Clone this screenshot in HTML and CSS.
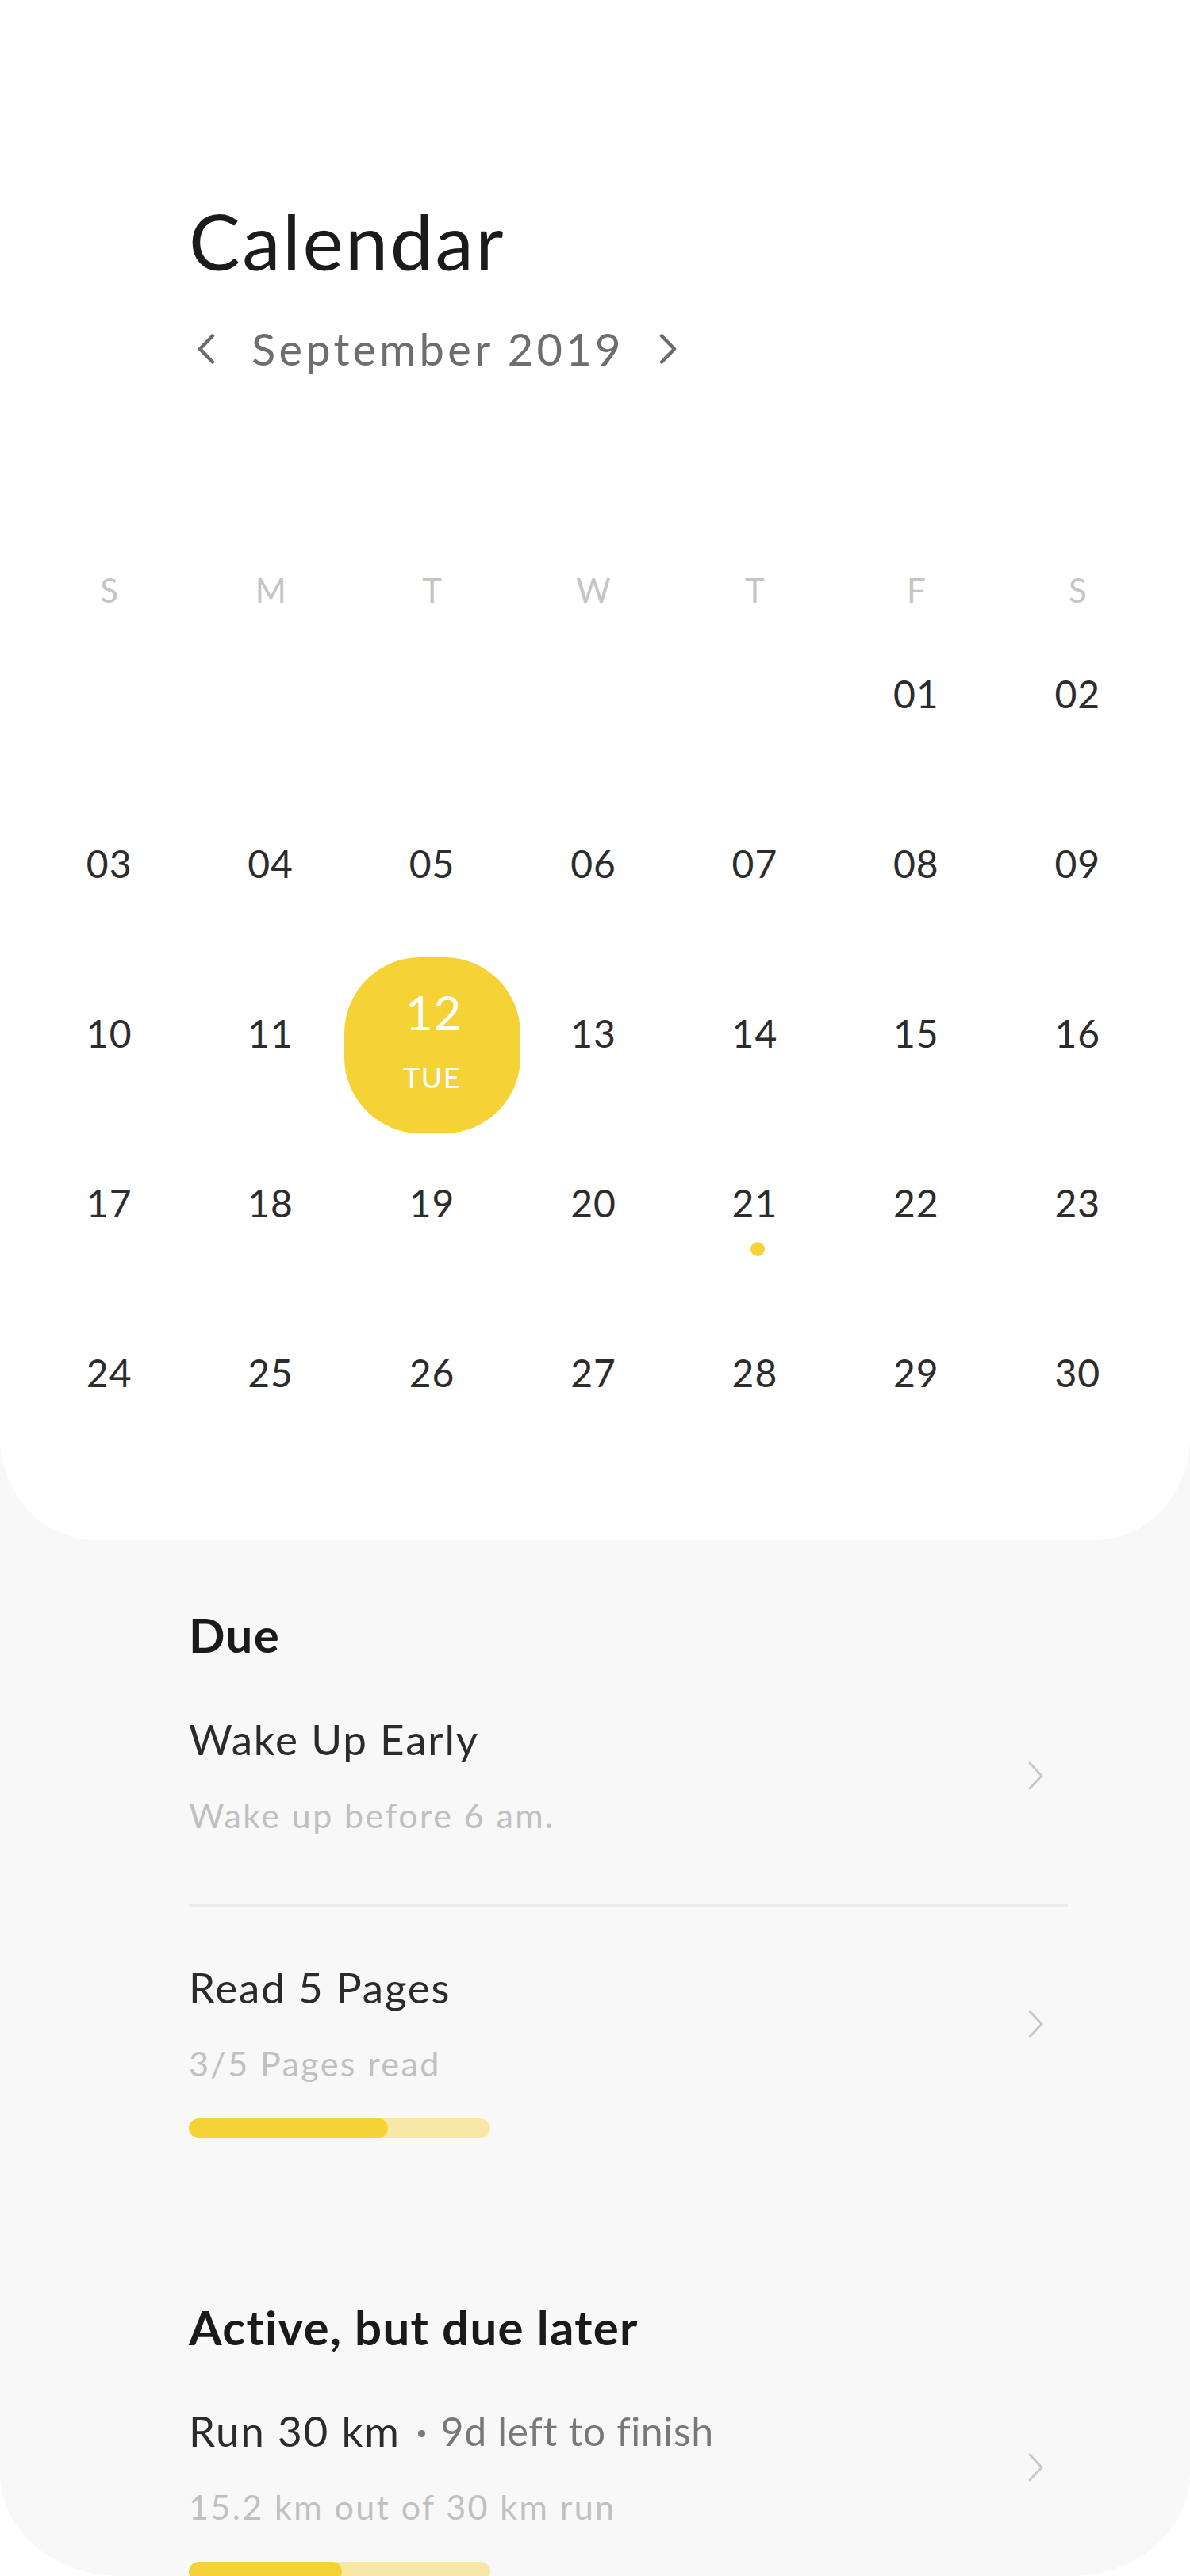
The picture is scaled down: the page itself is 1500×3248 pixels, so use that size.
FILE: index.html
```html
<!DOCTYPE html>
<html lang="en">
<head>
<meta charset="utf-8">
<title>Calendar</title>
<link rel="stylesheet" href="styles.css">
</head>
<body>
<div class="screen">
  <section class="cal-card">
    <div class="header">
      <h1 class="title">Calendar</h1>
      <div class="month-nav">
        <svg class="nav-chev" viewBox="0 0 22 38" aria-hidden="true"><path d="M19 2.5 L3 19 L19 35.5"/></svg>
        <span class="month">September 2019</span>
        <svg class="nav-chev nav-chev-r" viewBox="0 0 22 38" aria-hidden="true"><path d="M3 2.5 L19 19 L3 35.5"/></svg>
      </div>
    </div>
    <div class="weekdays">
      <span>S</span><span>M</span><span>T</span><span>W</span><span>T</span><span>F</span><span>S</span>
    </div>
    <div class="days">
      <div class="day"></div><div class="day"></div><div class="day"></div><div class="day"></div><div class="day"></div>
      <div class="day"><span>01</span></div><div class="day"><span>02</span></div>
      <div class="day"><span>03</span></div><div class="day"><span>04</span></div><div class="day"><span>05</span></div><div class="day"><span>06</span></div><div class="day"><span>07</span></div><div class="day"><span>08</span></div><div class="day"><span>09</span></div>
      <div class="day"><span>10</span></div><div class="day"><span>11</span></div>
      <div class="day"><div class="sel"><span class="sel-num">12</span><span class="sel-dow">TUE</span></div></div>
      <div class="day"><span>13</span></div><div class="day"><span>14</span></div><div class="day"><span>15</span></div><div class="day"><span>16</span></div>
      <div class="day"><span>17</span></div><div class="day"><span>18</span></div><div class="day"><span>19</span></div><div class="day"><span>20</span></div>
      <div class="day"><span>21</span><i class="event-dot"></i></div>
      <div class="day"><span>22</span></div><div class="day"><span>23</span></div>
      <div class="day"><span>24</span></div><div class="day"><span>25</span></div><div class="day"><span>26</span></div><div class="day"><span>27</span></div><div class="day"><span>28</span></div><div class="day"><span>29</span></div><div class="day"><span>30</span></div>
    </div>
  </section>

  <section class="tasks">
    <h2 class="section-title">Due</h2>
    <div class="item">
      <div class="item-row">
        <div class="item-text">
          <div class="item-title">Wake Up Early</div>
          <div class="item-sub">Wake up before 6 am.</div>
        </div>
        <svg class="chev" viewBox="0 0 21 36" aria-hidden="true"><path d="M3 2 L18 18 L3 34"/></svg>
      </div>
    </div>
    <div class="divider"></div>
    <div class="item">
      <div class="item-row">
        <div class="item-text">
          <div class="item-title">Read 5 Pages</div>
          <div class="item-sub">3/5 Pages read</div>
        </div>
        <svg class="chev" viewBox="0 0 21 36" aria-hidden="true"><path d="M3 2 L18 18 L3 34"/></svg>
      </div>
      <div class="bar"><div class="bar-fill" style="width:66%"></div></div>
    </div>

    <h2 class="section-title section-later">Active, but due later</h2>
    <div class="item">
      <div class="item-row">
        <div class="item-text">
          <div class="item-title">Run 30 km<i class="meta-dot"></i><span class="meta">9d left to finish</span></div>
          <div class="item-sub">15.2 km out of 30 km run</div>
        </div>
        <svg class="chev" viewBox="0 0 21 36" aria-hidden="true"><path d="M3 2 L18 18 L3 34"/></svg>
      </div>
      <div class="bar"><div class="bar-fill" style="width:50.7%"></div></div>
    </div>
  </section>
</div>
</body>
</html>
```

FILE: styles.css
```css
* {
  box-sizing: border-box;
  margin: 0;
  padding: 0;
}

body {
  margin: 0;
  background: #ffffff;
  font-family: "Lato", "Liberation Sans", sans-serif;
}

.screen {
  width: 1500px;
  height: 3248px;
  overflow: hidden;
  background: #f8f8f8;
  border-radius: 0 0 150px 150px / 0 0 130px 130px;
}

/* ---------- calendar card ---------- */
.cal-card {
  background: #ffffff;
  border-radius: 0 0 120px 120px / 0 0 130px 130px;
  padding: 256px 0 104px;
}

.header {
  padding-left: 238px;
}

.title {
  font-size: 97px;
  line-height: 96px;
  font-weight: 400;
  letter-spacing: 2.5px;
  color: #1b1b1b;
}

.month-nav {
  display: flex;
  align-items: center;
  height: 56px;
  margin-top: 60px;
  padding-left: 11px;
}

.nav-chev {
  width: 22px;
  height: 38px;
  flex: none;
}

.nav-chev path {
  fill: none;
  stroke: #6c6c6c;
  stroke-width: 4.5;
  stroke-linecap: round;
  stroke-linejoin: round;
}

.month {
  margin-left: 46px;
  font-size: 56px;
  line-height: 56px;
  letter-spacing: 4.2px;
  color: #6e6e6e;
}

.nav-chev-r {
  margin-left: 44px;
}

.weekdays {
  display: grid;
  grid-template-columns: repeat(7, minmax(0, 1fr));
  margin-top: 252px;
  padding: 0 40px 0 36px;
  font-size: 42px;
  line-height: 48px;
  color: #c5c5c5;
  text-align: center;
}

.days {
  display: grid;
  grid-template-columns: repeat(7, minmax(0, 1fr));
  grid-auto-rows: 214px;
  padding: 0 40px 0 36px;
}

.day {
  position: relative;
  display: flex;
  align-items: center;
  justify-content: center;
  font-size: 48px;
  line-height: 58px;
  letter-spacing: 1px;
  color: #2c2c2c;
}

.sel {
  flex: none;
  width: 222px;
  height: 222px;
  margin-top: 30px;
  padding-bottom: 14px;
  border-radius: 96px;
  background: #f5d336;
  color: #ffffff;
  display: flex;
  flex-direction: column;
  align-items: center;
  justify-content: center;
}

.sel-num {
  font-size: 60px;
  line-height: 60px;
  margin-left: 4px;
}

.sel-dow {
  margin-top: 34px;
  font-size: 36px;
  line-height: 36px;
  letter-spacing: 1.5px;
}

.event-dot {
  position: absolute;
  top: 156px;
  left: 50%;
  width: 18px;
  height: 18px;
  margin-left: -5px;
  border-radius: 50%;
  background: #f5d336;
}

/* ---------- tasks ---------- */
.tasks {
  padding: 83px 154px 0 238px;
}

.section-title {
  font-size: 60px;
  line-height: 72px;
  font-weight: 700;
  letter-spacing: 1.3px;
  color: #1a1a1a;
  margin-bottom: 64px;
}

.section-later {
  margin-top: 202px;
  margin-bottom: 63px;
}

.item-row {
  display: flex;
  align-items: center;
  justify-content: space-between;
}

.item-title {
  display: flex;
  align-items: center;
  font-size: 53px;
  line-height: 64px;
  letter-spacing: 1.8px;
  color: #2b2b2b;
}

.item-sub {
  margin-top: 36px;
  font-size: 43px;
  line-height: 56px;
  letter-spacing: 2.4px;
  color: #c0c0c0;
}

.chev {
  flex: none;
  width: 21px;
  height: 36px;
  margin-right: 30px;
}

.chev path {
  fill: none;
  stroke: #c8c8c8;
  stroke-width: 3;
  stroke-linecap: round;
  stroke-linejoin: round;
}

.divider {
  height: 3px;
  background: #ececec;
  margin: 84px 0 70px;
}

.bar {
  width: 380px;
  height: 25px;
  margin-top: 41px;
  border-radius: 13px;
  background: #f9e8a5;
  overflow: hidden;
}

.bar-fill {
  height: 100%;
  border-radius: 13px;
  background: #f5d336;
}

.meta-dot {
  display: inline-block;
  flex: none;
  width: 9px;
  height: 9px;
  margin: 6px 20px 0 22px;
  border-radius: 50%;
  background: #7a7a7a;
}

.meta {
  font-size: 50px;
  letter-spacing: 0.6px;
  color: #787878;
}
```
